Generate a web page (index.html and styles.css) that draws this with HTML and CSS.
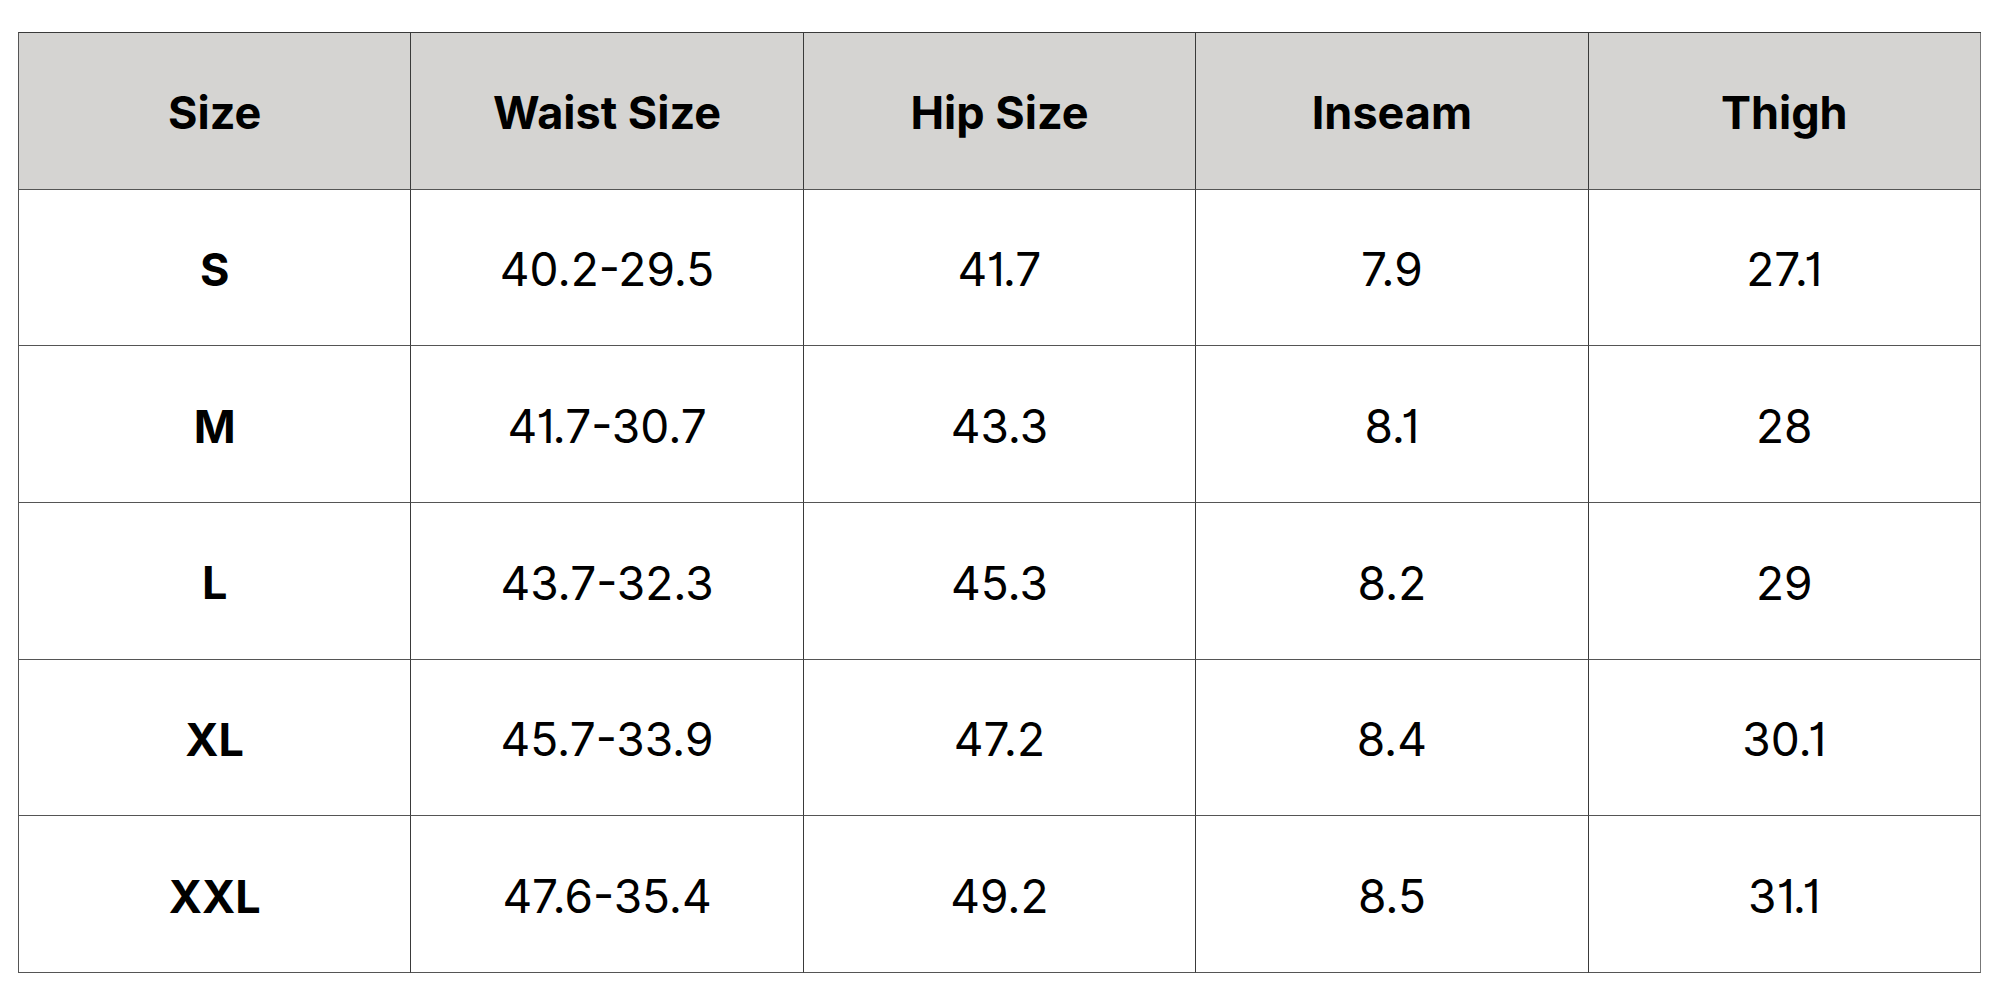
FILE: index.html
```html
<!DOCTYPE html>
<html>
<head>
<meta charset="utf-8">
<link rel="stylesheet" href="styles.css">
</head>
<body>
<div class="chart">
  <div class="cell head">Size</div>
  <div class="cell head">Waist Size</div>
  <div class="cell head">Hip Size</div>
  <div class="cell head">Inseam</div>
  <div class="cell head">Thigh</div>

  <div class="cell label">S</div>
  <div class="cell">40.2-29.5</div>
  <div class="cell">41.7</div>
  <div class="cell">7.9</div>
  <div class="cell">27.1</div>

  <div class="cell label">M</div>
  <div class="cell">41.7-30.7</div>
  <div class="cell">43.3</div>
  <div class="cell">8.1</div>
  <div class="cell">28</div>

  <div class="cell label">L</div>
  <div class="cell">43.7-32.3</div>
  <div class="cell">45.3</div>
  <div class="cell">8.2</div>
  <div class="cell">29</div>

  <div class="cell label">XL</div>
  <div class="cell">45.7-33.9</div>
  <div class="cell">47.2</div>
  <div class="cell">8.4</div>
  <div class="cell">30.1</div>

  <div class="cell label">XXL</div>
  <div class="cell">47.6-35.4</div>
  <div class="cell">49.2</div>
  <div class="cell">8.5</div>
  <div class="cell">31.1</div>
</div>
</body>
</html>
```
FILE: styles.css
```css
html, body {
  margin: 0;
  padding: 0;
  background: #ffffff;
}
body {
  padding: 32px 0 0 18px;
  font-family: Inter, "Noto Sans", sans-serif;
  font-feature-settings: "cv01";
  color: #000;
}
.chart {
  display: grid;
  grid-template-columns: repeat(5, 1fr);
  grid-template-rows: repeat(6, 1fr);
  width: 1963px;
  height: 941px;
  box-sizing: border-box;
  border-top: 1px solid #3a3a3a;
  border-left: 1px solid #555;
}
.cell {
  display: flex;
  align-items: center;
  justify-content: center;
  border-right: 1px solid #3a3a3a;
  border-bottom: 1px solid #555;
  font-size: 46px;
  font-weight: 400;
  padding-top: 4px;
}
.cell:nth-child(5n) {
  border-right-color: #777;
}
.head {
  background: #d5d4d2;
  font-weight: 700;
  font-size: 45px;
  padding-top: 3px;
}
.label {
  font-weight: 700;
  font-size: 45px;
}
```
